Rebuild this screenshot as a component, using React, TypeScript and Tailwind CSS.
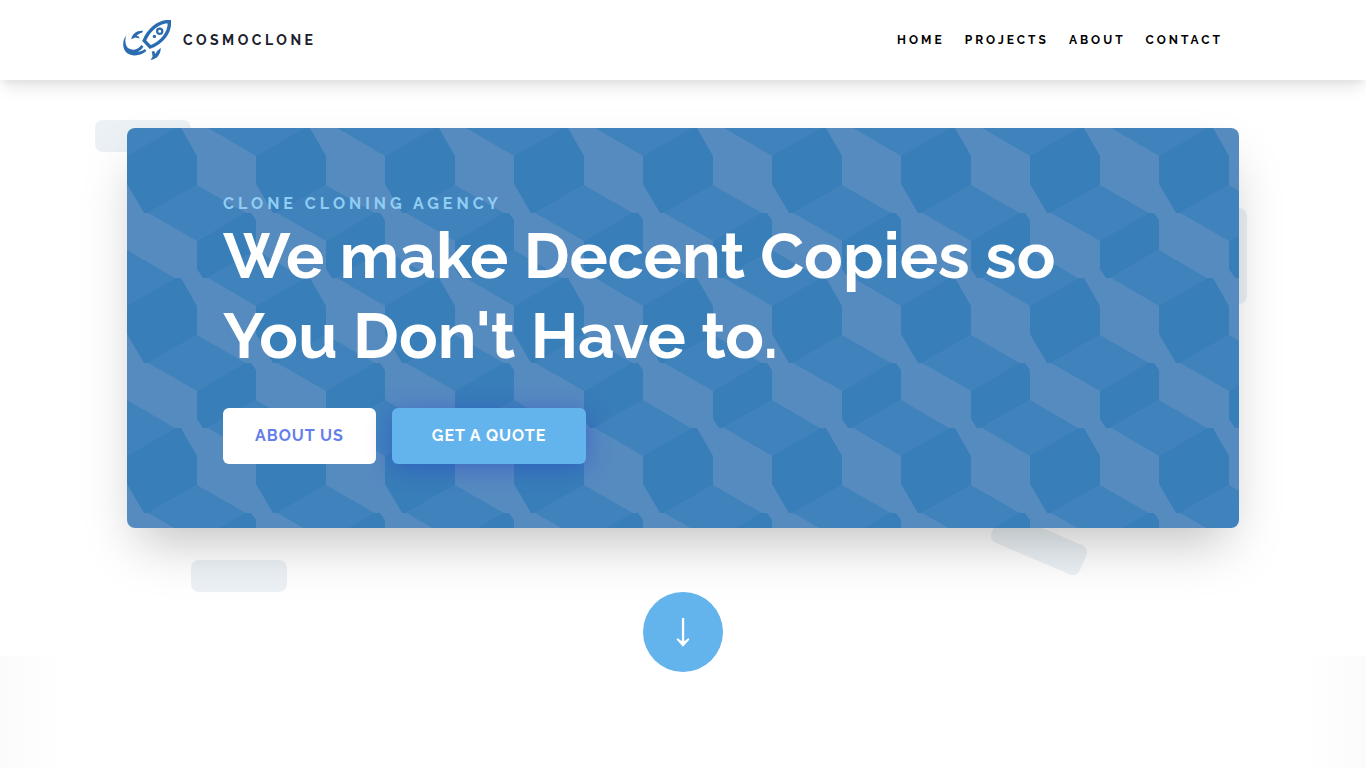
const navItems = ["Home", "Projects", "About", "Contact"];

function Logo() {
  return (
    <svg viewBox="0 0 48 40" className="h-10 w-12" fill="#2b6cb0" aria-hidden="true">
      <path
        d="M46.4 1.6C35.5 1.4 26 9.5 21.2 20.6L27.2 27C38.5 22.8 47 13 46.4 1.6Z"
        fill="none"
        stroke="#2b6cb0"
        strokeWidth="3.4"
      />
      <circle cx="36.7" cy="11.2" r="2.6" fill="none" stroke="#2b6cb0" strokeWidth="2.2" />
      <circle cx="31.4" cy="16.4" r="1.7" />
      <path d="M20.2 10.8C14 10.2 9.2 13.6 8.3 19.2L12.3 17.6L16.6 18.6L15.8 16.6L13.6 15.8C15.4 14 17.6 13 19 12.8Z" />
      <path d="M37.8 28C37.6 34.2 34.4 39 27.6 40L29.6 36.6L28.8 31.6L31.2 31L32.2 34L34.6 30.4Z" />
      <path d="M3.2 15.6C-1.6 21.4-.8 32 6.8 34.6C13 36.7 19.4 34.6 23.4 31L21.8 29C19.6 30.8 16.8 31.8 14.6 31.8C17 30.8 19.2 29 20.4 26.6L18.4 25C15.4 29.6 9.6 31 5.8 28.6C2.2 26.2 1.6 20.6 3.2 15.6Z" />
    </svg>
  );
}

function CubePattern() {
  return (
    <svg className="absolute inset-0 h-full w-full rounded-lg" aria-hidden="true">
      <defs>
        <pattern id="cubes" width="129" height="150" patternUnits="userSpaceOnUse">
          <rect width="129" height="150" fill="#568bc0" />
          <g fill="#4083bc">
            <path d="M0 0H50V2L0 30Z" />
            <path d="M81 0H129V28Z" />
            <path d="M70 57L119 85L70 113L21 85Z" />
            <path d="M0 122L48 150H0Z" />
            <path d="M129 122L80 150H129Z" />
          </g>
          <g fill="#387eb8">
            <path d="M0 28L49 0H54L70 28V57L21 85H17L0 56Z" />
            <path d="M70 113L118 85H124L129 92V122L80 150H76L70 141Z" />
          </g>
        </pattern>
      </defs>
      <rect width="100%" height="100%" fill="url(#cubes)" />
    </svg>
  );
}

export default function App() {
  return (
    <div className="min-h-screen overflow-x-hidden bg-white font-['Raleway','Lato',sans-serif]">
      <header className="relative z-10 bg-white px-6 shadow-[0_10px_15px_-3px_rgba(0,0,0,0.1),0_4px_6px_-2px_rgba(0,0,0,0.05)]">
        <div className="mx-auto flex h-20 max-w-[1120px] items-center justify-between">
          <a href="#home" className="flex items-center gap-3 text-sm font-bold tracking-[0.25em] text-[#1a202c]">
            <Logo />
            COSMOCLONE
          </a>
          <nav className="flex gap-5 pr-5 text-xs font-bold tracking-[0.25em] text-black uppercase">
            {navItems.map((item) => (
              <a key={item} href={`#${item.toLowerCase()}`}>
                {item}
              </a>
            ))}
          </nav>
        </div>
      </header>

      <main>
        <section className="relative px-6 pt-12 pb-32">
          <div className="relative mx-auto max-w-[1112px]">
            <div className="absolute -top-2 -left-8 h-8 w-24 rounded-lg bg-[#ebf1f5]" />
            <div className="absolute top-20 -right-2 h-24 w-8 rounded-lg bg-[#ebf1f5]" />
            <div className="absolute -bottom-16 left-16 h-8 w-24 rounded-lg bg-[#ebf1f5]" />
            <div className="absolute right-[152px] -bottom-8 h-8 w-24 rotate-[23deg] rounded-lg bg-[#ebf1f5]" />

            <div className="relative rounded-lg px-24 py-16 shadow-[0_25px_50px_-12px_rgba(0,0,0,0.25)]">
              <CubePattern />
              <div className="relative">
                <p className="text-base font-bold tracking-[0.25em] text-[#90cdf4]">CLONE CLONING AGENCY</p>
                <h1 className="text-[64px] leading-[80px] font-bold text-white">
                  We make Decent Copies so
                  <br />
                  You Don't Have to.
                </h1>
                <div className="mt-8 flex gap-4">
                  <button className="h-14 rounded-md bg-white px-8 font-bold tracking-[1px] whitespace-nowrap text-[#667eea]">
                    ABOUT US
                  </button>
                  <button className="h-14 rounded-md bg-[#63b3ed] px-10 font-bold tracking-[1px] whitespace-nowrap text-white shadow-[0_4px_24px_rgba(41,60,200,0.45)]">
                    GET A QUOTE
                  </button>
                </div>
              </div>
            </div>
          </div>
          <a
            href="#projects"
            aria-label="Scroll down"
            className="absolute -bottom-4 left-1/2 z-10 flex size-20 -translate-x-1/2 items-center justify-center rounded-full bg-[#63b3ed]"
          >
            <svg viewBox="0 0 14 30" className="h-[30px] w-3.5" aria-hidden="true">
              <path
                d="M5.9 1H8.2V24C9.6 23.4 11 22.2 12.2 20.9L13.4 22.4L7 29.8L.6 22.4L1.8 20.9C3 22.2 4.4 23.4 5.9 24Z"
                fill="#fff"
              />
            </svg>
          </a>
        </section>
        <section id="projects" className="flex h-28 justify-between">
          <div className="w-16 bg-linear-to-r from-[#fbfbfb] to-white" />
          <div className="w-16 bg-linear-to-l from-[#fbfbfb] to-white" />
        </section>
      </main>
    </div>
  );
}
